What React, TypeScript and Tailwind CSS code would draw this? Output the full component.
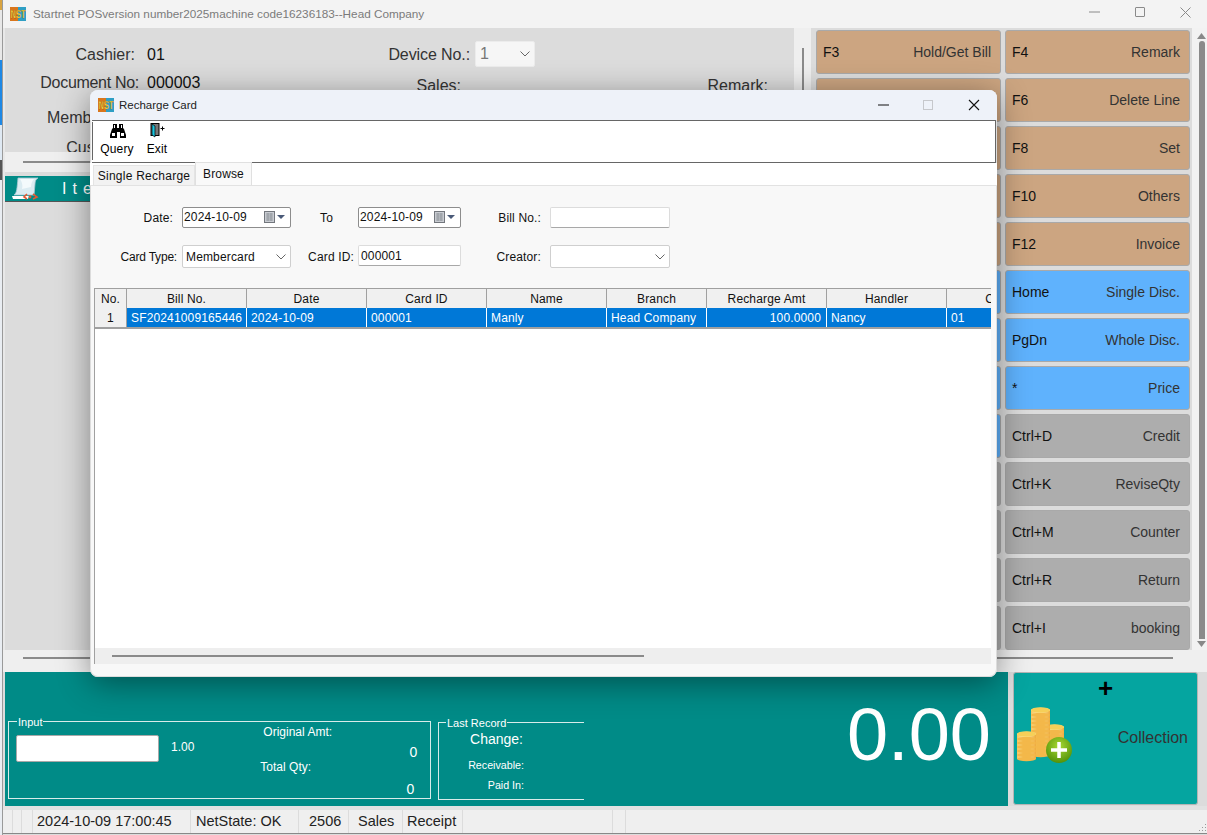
import type { ReactNode } from 'react';

type FnKey = { keyName: string; label: string; color: string };

const tan = 'bg-[#cca581]';
const blue = 'bg-[#5fb2fd]';
const gray = 'bg-[#adadad]';

const leftKeys: FnKey[] = [
  { keyName: 'F3', label: 'Hold/Get Bill', color: tan },
  { keyName: '', label: '', color: tan },
  { keyName: '', label: '', color: tan },
  { keyName: '', label: '', color: tan },
  { keyName: '', label: '', color: tan },
  { keyName: '', label: '', color: blue },
  { keyName: '', label: '', color: blue },
  { keyName: '', label: '', color: blue },
  { keyName: '', label: '', color: blue },
  { keyName: '', label: '', color: gray },
  { keyName: '', label: '', color: gray },
  { keyName: '', label: '', color: gray },
  { keyName: '', label: '', color: gray },
];

const rightKeys: FnKey[] = [
  { keyName: 'F4', label: 'Remark', color: tan },
  { keyName: 'F6', label: 'Delete Line', color: tan },
  { keyName: 'F8', label: 'Set', color: tan },
  { keyName: 'F10', label: 'Others', color: tan },
  { keyName: 'F12', label: 'Invoice', color: tan },
  { keyName: 'Home', label: 'Single Disc.', color: blue },
  { keyName: 'PgDn', label: 'Whole Disc.', color: blue },
  { keyName: '*', label: 'Price', color: blue },
  { keyName: 'Ctrl+D', label: 'Credit', color: gray },
  { keyName: 'Ctrl+K', label: 'ReviseQty', color: gray },
  { keyName: 'Ctrl+M', label: 'Counter', color: gray },
  { keyName: 'Ctrl+R', label: 'Return', color: gray },
  { keyName: 'Ctrl+I', label: 'booking', color: gray },
];

const columns = [
  { title: 'Bill No.', value: 'SF20241009165446', width: 'w-[120px]', align: 'text-left' },
  { title: 'Date', value: '2024-10-09', width: 'w-[120px]', align: 'text-left' },
  { title: 'Card ID', value: '000001', width: 'w-[120px]', align: 'text-left' },
  { title: 'Name', value: 'Manly', width: 'w-[120px]', align: 'text-left' },
  { title: 'Branch', value: 'Head Company', width: 'w-[100px]', align: 'text-left' },
  { title: 'Recharge Amt', value: '100.0000', width: 'w-[120px]', align: 'text-right' },
  { title: 'Handler', value: 'Nancy', width: 'w-[120px]', align: 'text-left' },
  { title: 'Cashier', value: '01', width: 'w-[120px]', align: 'text-left' },
];

function NstLogo() {
  return (
    <svg width="16" height="16" viewBox="0 0 16 16" className="shrink-0">
      <rect x="0" y="1" width="8" height="14" fill="#d9761c" />
      <rect x="8" y="1" width="8" height="14" fill="#2f9fc4" />
      <text x="0.500" y="12" fontSize="10" fontWeight="bold" textLength="15" lengthAdjust="spacingAndGlyphs" fill="#f8dc45" stroke="#6b3a12" strokeWidth="0.250">
        NST
      </text>
    </svg>
  );
}

function Binoculars() {
  return (
    <svg width="16" height="14" viewBox="0 0 16 14" className="ml-[1px]">
      <path d="M3 0h4v4h2V0h4v4l1 1 2 6v3h-6V8H7v6H0v-3l2-6 1-1z" fill="#000" />
      <path d="M2 9h3v3H2zM11 9h3v3h-3zM4 1h1v3H4zM11 1h1v3h-1z" fill="#fff" />
    </svg>
  );
}

function ExitDoor() {
  return (
    <svg width="15" height="15" viewBox="0 0 15 15">
      <rect x="1" y="0.500" width="8" height="12" fill="#777" stroke="#000" />
      <path d="M2 1l3 2v11l-3-2z" fill="#19c6e0" stroke="#000" strokeWidth="0.700" />
      <path d="M10.500 5.500h4M12.500 3.500v4" stroke="#000" strokeWidth="1" />
    </svg>
  );
}

function CalendarDrop() {
  return (
    <div className="ml-auto flex items-center gap-[1px] pr-[5px]">
      <svg width="12" height="12" viewBox="0 0 12 12">
        <rect x="0.500" y="0.500" width="10" height="11" fill="#c9ccd2" stroke="#73777d" />
        <path d="M2 3h7M2 5h7M2 7h7M2 9h7M4 2v8M7 2v8" stroke="#858a92" strokeWidth="0.700" />
      </svg>
      <svg width="8" height="4" viewBox="0 0 8 4">
        <path d="M0 0h8L4 4z" fill="#4a5a78" />
      </svg>
    </div>
  );
}

function Chevron() {
  return (
    <svg width="10" height="6" viewBox="0 0 10 6" className="ml-auto mr-[4px] shrink-0">
      <path d="M0.500 0.500L5 5l4.500-4.500" fill="none" stroke="#666" strokeWidth="1" />
    </svg>
  );
}

function ScrollIcon() {
  return (
    <svg width="27" height="23" viewBox="0 0 27 23" className="shrink-0">
      <path d="M6 1h20c-2 1-3 3-3 6l-1 11H2C5 16 5 11 6 1z" fill="#dcecf2" stroke="#a9c8d2" strokeWidth="0.800" />
      <path d="M8 2h14c-2 2-3 5-3 8l-9 2c1-4 0-7-2-10z" fill="#f4fafc" />
      <path d="M0 19h17l-1 3H1z" fill="#fff" />
      <path d="M15 17l-3 3 3 2M21 17l4 3-4 2" fill="none" stroke="#e25a33" strokeWidth="1.600" />
      <circle cx="18" cy="20" r="1.400" fill="#e25a33" />
    </svg>
  );
}

function CoinStack({ x, top, count }: { x: number; top: number; count: number }) {
  const rows = Array.from({ length: count }, (_, i) => count - 1 - i);
  return (
    <g>
      {rows.map((i) => (
        <g key={i}>
          <rect x={x} y={top + i * 4} width="19" height="5" fill="url(#coinSide)" />
          <ellipse cx={x + 9.500} cy={top + i * 4 + 5} rx="9.500" ry="2.200" fill="#f3b84a" />
          <ellipse cx={x + 9.500} cy={top + i * 4} rx="9.500" ry="2.200" fill="#fff1b8" />
        </g>
      ))}
      <ellipse cx={x + 9.500} cy={top} rx="9.500" ry="2.800" fill="#f6cf58" />
    </g>
  );
}

function Coins() {
  return (
    <svg width="58" height="60" viewBox="0 0 58 60" className="shrink-0">
      <defs>
        <linearGradient id="coinSide" x1="0" x2="1" y1="0" y2="0">
          <stop offset="0" stopColor="#f7c660" />
          <stop offset="0.500" stopColor="#fff0b5" />
          <stop offset="1" stopColor="#eeaa3c" />
        </linearGradient>
        <radialGradient id="plusBall" cx="0.500" cy="0.350" r="0.700">
          <stop offset="0" stopColor="#a9d934" />
          <stop offset="1" stopColor="#4c8c05" />
        </radialGradient>
      </defs>
      <CoinStack x={29} top={20} count={6} />
      <CoinStack x={15} top={3} count={11} />
      <CoinStack x={1} top={27} count={6} />
      <circle cx="43" cy="43" r="13" fill="url(#plusBall)" />
      <path d="M43 35v16M35 43h16" stroke="#fff" strokeWidth="3.500" />
    </svg>
  );
}

function DialogInput({ width, children, strong }: { width: string; children?: ReactNode; strong?: boolean }) {
  return (
    <div
      className={`${width} h-[21px] flex items-center bg-white rounded-[2px] border ${
        strong ? 'border-[#8d8d8d]' : 'border-[#dcdcdc] border-b-[#a8a8a8]'
      } pl-[1px] text-[12px] text-[#111]`}
    >
      {children}
    </div>
  );
}

function DialogCombo({ width, children }: { width: string; children?: ReactNode }) {
  return (
    <div className={`${width} h-[23px] flex items-center bg-white rounded-[2px] border border-[#cfcfcf] pl-[3px] text-[12px] text-[#111]`}>
      {children}
      <Chevron />
    </div>
  );
}

function RechargeDialog() {
  return (
    <div className="absolute left-[90px] top-[90px] w-[907px] h-[587px] flex flex-col rounded-lg bg-[#f8f8f8] shadow-[inset_0_0_0_1px_#dcdcdc,0_6px_32px_rgba(0,0,0,0.42)] text-[12px] tracking-[0.15px] text-[#111]">
      <div className="h-[30px] shrink-0 flex items-center rounded-t-lg bg-[#eef2f9] pl-[8px]">
        <NstLogo />
        <span className="ml-[5px] pt-[1px] text-[11.5px] tracking-normal text-[#222]">Recharge Card</span>
        <svg width="12" height="2" viewBox="0 0 12 2" className="ml-auto">
          <path d="M0 1h11" stroke="#111" strokeWidth="1" />
        </svg>
        <div className="ml-[33px] w-[10px] h-[10px] border border-[#c6c8cc]" />
        <svg width="12" height="12" viewBox="0 0 12 12" className="ml-[35px] mr-[17px]">
          <path d="M1 1l10 10M11 1L1 11" stroke="#111" strokeWidth="1.100" />
        </svg>
      </div>
      <div className="h-[43px] shrink-0 ml-[2px] mr-[1px] flex items-start bg-white border-y border-r border-[#666] text-[#000]">
        <div className="h-[38px] w-[1px] bg-[#666] mt-[1px]" />
        <div className="ml-[7px] w-[34px] flex flex-col items-center pt-[3px]">
          <Binoculars />
          <span className="mt-[2px]">Query</span>
        </div>
        <div className="ml-[6px] w-[34px] flex flex-col items-center pt-[2px]">
          <ExitDoor />
          <span className="mt-[2px]">Exit</span>
        </div>
      </div>
      <div className="h-[23px] shrink-0 flex items-end bg-white border-b border-[#e2e2e2] pl-[3px] pr-[3px]">
        <div className="h-[20px] w-[102px] flex items-center justify-center bg-[#f2f2f2] border border-b-0 border-[#e4e4e4] tracking-[0.25px]">Single Recharge</div>
        <div className="h-[23px] w-[57px] flex items-start justify-center bg-[#f9f9f9] border border-b-0 border-[#e0e0e0] pt-[2px]">Browse</div>
      </div>
      <div className="flex-1 flex flex-col min-h-0 pl-[3px] pr-[6px] pb-[13px]">
        <div className="h-[102px] shrink-0 flex flex-col pt-[20px] gap-[17px]">
          <div className="flex items-center h-[22px]">
            <span className="w-[80px] mr-[9px] pt-[1px] text-right">Date:</span>
            <DialogInput width="w-[109px]" strong>2024-10-09<CalendarDrop /></DialogInput>
            <span className="w-[67px] pl-[29px] pt-[1px]">To</span>
            <DialogInput width="w-[103px]" strong>2024-10-09<CalendarDrop /></DialogInput>
            <span className="w-[80px] mr-[9px] pt-[1px] text-right">Bill No.:</span>
            <DialogInput width="w-[120px]" />
          </div>
          <div className="flex items-center h-[23px]">
            <span className="w-[84px] mr-[5px] text-right tracking-[-0.2px]">Card Type:</span>
            <DialogCombo width="w-[109px]">Membercard</DialogCombo>
            <span className="w-[63px] mr-[4px] text-right">Card ID:</span>
            <div className="-mt-[2px]">
              <DialogInput width="w-[103px]"><span className="ml-[1px]">000001</span></DialogInput>
            </div>
            <span className="w-[80px] mr-[9px] text-right">Creator:</span>
            <DialogCombo width="w-[120px]" />
          </div>
        </div>
        <div className="flex-1 min-h-0 flex flex-col ml-[1px] overflow-hidden bg-white border-l border-[#a0a0a0]">
          <div className="flex shrink-0 h-[20px] border-t border-[#a0a0a0] bg-[#f0f0f0]">
            <div className="w-[32px] shrink-0 flex items-center justify-center border-r border-[#a0a0a0]">No.</div>
            {columns.map((col) => (
              <div key={col.title} className={`${col.width} shrink-0 flex items-center justify-center border-r border-[#a0a0a0]`}>
                {col.title}
              </div>
            ))}
          </div>
          <div className="flex shrink-0 h-[21px] border-b-2 border-[#a0a0a0] bg-[#0078d7] text-white">
            <div className="w-[32px] shrink-0 flex items-center justify-center bg-[#f0f0f0] text-[#111] border-r border-[#a0a0a0]">1</div>
            {columns.map((col) => (
              <div key={col.title} className={`${col.width} shrink-0 pl-[4px] pr-[5px] leading-[20px] border-r border-white whitespace-nowrap overflow-hidden ${col.align}`}>
                {col.value}
              </div>
            ))}
          </div>
          <div className="flex-1" />
          <div className="h-[16px] shrink-0 flex items-center bg-[#eeeeee] pl-[17px]">
            <div className="w-[532px] h-[2px] bg-[#8a8a8a]" />
          </div>
        </div>
      </div>
    </div>
  );
}

function KeyButton({ item }: { item: FnKey }) {
  return (
    <div className={`h-[44px] flex items-center justify-between rounded-[3px] border border-[#a9a9a9] pl-[6px] pr-[9px] text-[14px] ${item.color}`}>
      <span className="text-[#111]">{item.keyName}</span>
      <span className="text-[#333]">{item.label}</span>
    </div>
  );
}

export default function App() {
  return (
    <div className="relative w-[1207px] h-[835px] flex overflow-hidden bg-white font-[Liberation_Sans,Arial,sans-serif]">
      <div className="w-[2px] shrink-0 flex flex-col">
        <div className="h-[10px] bg-[#d9a441]" />
        <div className="h-[50px] bg-[#e8e8e8]" />
        <div className="h-[65px] bg-[#1e88e5]" />
        <div className="h-[35px] bg-[#dfe9f3]" />
        <div className="h-[20px] bg-[#555]" />
        <div className="flex-1 bg-[#e9edf2]" />
      </div>
      <div className="flex-1 min-w-0 flex flex-col bg-[#dcdcdc] border-l border-[#9a9a9a]">
        <div className="h-[28px] shrink-0 flex items-center bg-[#f3f3f3] pl-[7px] text-[11.75px] text-[#7b7b7b]">
          <NstLogo />
          <span className="ml-[7px]">Startnet POSversion number2025machine code16236183--Head Company</span>
          <svg width="11" height="2" viewBox="0 0 11 2" className="ml-auto mb-[4px]">
            <path d="M0 1h11" stroke="#8a8a8a" strokeWidth="1" />
          </svg>
          <div className="ml-[35px] mb-[4px] w-[10px] h-[10px] border border-[#8a8a8a] rounded-[1px]" />
          <svg width="11" height="11" viewBox="0 0 11 11" className="ml-[35px] mr-[16px] mb-[4px]">
            <path d="M0.500 0.500l10 10M10.500 0.500l-10 10" stroke="#8a8a8a" strokeWidth="1" />
          </svg>
        </div>

        <div className="h-[622px] shrink-0 flex">
          <div className="w-[2px] shrink-0 bg-[#e8e8e8]" />
          <div className="w-[789px] shrink-0 flex flex-col">
            <div className="h-[124px] shrink-0 flex text-[16px] text-[#333]">
              <div className="w-[352px] shrink-0 flex flex-col">
                <div className="h-[26px] mt-[15px] flex items-center">
                  <span className="w-[130px] text-right">Cashier:</span>
                  <span className="ml-[12px] text-[#111]">01</span>
                </div>
                <div className="mt-[4px] flex items-center h-[26px]">
                  <span className="w-[134px] text-right tracking-[-0.3px]">Document No:</span>
                  <span className="ml-[8px] text-[#111]">000003</span>
                </div>
                <div className="mt-[11px] h-[26px] flex items-center">
                  <span className="w-[130px] text-right">Member No:</span>
                </div>
                <div className="mt-[6px] h-[26px] flex items-center">
                  <span className="w-[135px] text-right">Customer:</span>
                </div>
              </div>
              <div className="w-[180px] shrink-0 flex flex-col">
                <div className="h-[26px] mt-[13px] flex items-center">
                  <span className="w-[113px] pt-[1px] text-right tracking-[-0.1px]">Device No.:</span>
                  <div className="ml-[5px] w-[60px] h-[26px] flex items-center bg-[#f6f6f6] border border-[#ececec] rounded-[2px] pl-[4px] text-[#777]">
                    1
                    <Chevron />
                  </div>
                </div>
                <div className="mt-[6px] h-[26px] flex items-center">
                  <span className="w-[104px] text-right">Sales:</span>
                </div>
              </div>
              <div className="flex-1 flex flex-col pt-[45px] pr-[26px] items-end">
                <span className="h-[26px] leading-[26px]">Remark:</span>
              </div>
            </div>
            <div className="h-[20px] shrink-0 flex items-center bg-[#efefef] pl-[18px]">
              <div className="w-[700px] h-[2px] bg-[#8a8a8a]" />
            </div>
            <div className="h-[26px] mt-[4px] shrink-0 flex items-center bg-[#008b87] pl-[7px] text-[16px] text-white border-b border-[#555] tracking-[6px]">
              <ScrollIcon />
              <span className="ml-[23px]">Item</span>
            </div>
          </div>
          <div className="w-[17px] shrink-0 bg-[#efefef] mr-[5px] pl-[8px] pt-[20px]">
            <div className="w-[2px] h-[100px] bg-[#8a8a8a]" />
          </div>
          <div className="flex gap-[4px] pt-[2px]">
            <div className="w-[185px] flex flex-col gap-[4px]">
              {leftKeys.map((item, i) => (
                <KeyButton key={i} item={item} />
              ))}
            </div>
            <div className="w-[185px] flex flex-col gap-[4px]">
              {rightKeys.map((item) => (
                <KeyButton key={item.keyName} item={item} />
              ))}
            </div>
          </div>
          <div className="flex-1 ml-[2px] flex flex-col items-center bg-[#f2f2f2] pl-[4px] pt-[5px] pb-[3px]">
            <svg width="9" height="6" viewBox="0 0 9 6"><path d="M0 6h9L4.500 0z" fill="#888" /></svg>
            <div className="w-[6px] flex-1 mt-[2px] mb-[2px] bg-[#8a8a8a] rounded-t-[3px]" />
            <svg width="9" height="6" viewBox="0 0 9 6"><path d="M0 0h9L4.500 6z" fill="#888" /></svg>
          </div>
        </div>

        <div className="h-[22px] shrink-0 flex items-start bg-[#efefef] pl-[20px] pt-[7px]">
          <div className="w-[1150px] h-[2px] bg-[#8a8a8a]" />
        </div>

        <div className="h-[134px] shrink-0 flex pl-[2px]">
          <div className="w-[1003px] shrink-0 flex items-end bg-[#008b87] text-white pl-[3px] pb-[7px]">
            <div className="relative w-[423px] h-[78px] border border-[#d8ecea] flex pl-[7px] pt-[13px]">
              <span className="absolute left-[8px] -top-[6px] bg-[#008b87] px-[1px] text-[11px] leading-[13px]">Input</span>
              <div className="w-[143px] h-[27px] bg-white rounded-[2px] border border-[#a8a8a8]" />
              <span className="ml-[12px] mt-[3px] text-[12px]">1.00</span>
              <div className="ml-[69px] -mt-[12px] w-[154px] flex flex-col text-[12px]">
                <span className="h-[15px]">Original Amt:</span>
                <span className="text-right mt-[4px] h-[16px] text-[14px]">0</span>
                <span className="h-[15px] -ml-[3px]">Total Qty:</span>
                <span className="text-right mt-[6px] h-[16px] text-[14px] pr-[3px]">0</span>
              </div>
            </div>
            <div className="relative ml-[7px] -mb-[1px] w-[146px] h-[78px] border-l border-y border-[#d8ecea] text-right">
              <span className="absolute left-[7px] -top-[6px] bg-[#008b87] px-[1px] text-[11px] leading-[13px]">Last Record</span>
              <div className="w-[84px] mt-[8px] text-[14px] leading-[16px]">Change:</div>
              <div className="w-[85px] mt-[12px] text-[10.7px] leading-[12px]">Receivable:</div>
              <div className="w-[85px] mt-[8px] text-[10.7px] leading-[12px]">Paid In:</div>
            </div>
            <div className="flex-1 self-start text-right text-[74px] leading-none pr-[17px] pt-[26px]">0.00</div>
          </div>
          <div className="ml-[5px] w-[185px] h-[133px] shrink-0 flex flex-col bg-[#05a5a0] border border-[#b5b5b5] rounded-[3px]">
            <div className="h-[24px] mt-[3px] text-center text-[26px] font-bold leading-[24px] text-black">+</div>
            <div className="flex items-center justify-between pl-[2px] pr-[9px] mt-[7px]">
              <Coins />
              <span className="pt-[1px] text-[16px] text-[#333]">Collection</span>
            </div>
          </div>
        </div>

        <div className="h-[4px] shrink-0 bg-[#e2e2e2]" />
        <div className="h-[24px] shrink-0 flex items-center bg-[#efefef] text-[14.5px] text-[#222] border-b border-[#888]">
          <div className="w-[10px] h-full border-r border-[#dcdcdc]" />
          <div className="w-[9px] h-full border-r border-[#dcdcdc]" />
          <div className="w-[11px] h-full border-r border-[#dcdcdc]" />
          <div className="w-[158px] h-full pl-[4px] leading-[23px] border-r border-[#dcdcdc] whitespace-nowrap">2024-10-09 17:00:45</div>
          <div className="w-[108px] h-full pl-[5px] leading-[23px] border-r border-[#dcdcdc] whitespace-nowrap">NetState: OK</div>
          <div className="w-[50px] h-full pl-[10px] leading-[23px] border-r border-[#dcdcdc]">2506</div>
          <div className="w-[54px] h-full pl-[9px] leading-[23px] border-r border-[#dcdcdc]">Sales</div>
          <div className="w-[60px] h-full pl-[4px] leading-[23px] border-r border-[#dcdcdc]">Receipt</div>
          <div className="w-[150px] h-full border-r border-[#dcdcdc]" />
          <div className="w-[13px] h-full border-r border-[#dcdcdc]" />
          <svg width="9" height="9" viewBox="0 0 9 9" className="ml-auto self-end mb-[1px]">
            <path d="M7 1h1v1H7zM4 4h1v1H4zM7 4h1v1H7zM1 7h1v1H1zM4 7h1v1H4zM7 7h1v1H7z" fill="#9a9a9a" />
          </svg>
        </div>
      </div>
      <RechargeDialog />
    </div>
  );
}
